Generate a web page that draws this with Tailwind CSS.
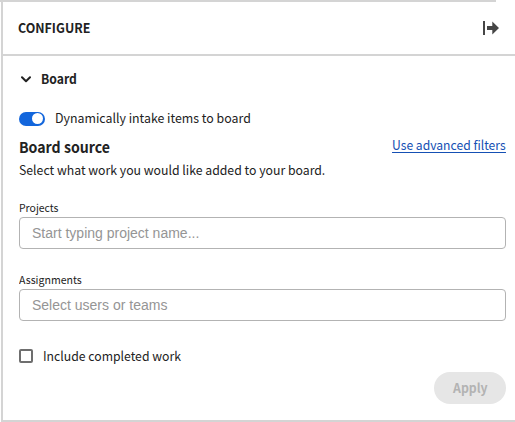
<!DOCTYPE html>
<html lang="en">
<head>
<meta charset="utf-8">
<title>Configure board</title>
<script src="https://cdn.jsdelivr.net/npm/@tailwindcss/browser@4"></script>
</head>
<body class="w-[515px] h-[422px] overflow-hidden bg-white text-[#222] font-['Noto_Sans_CJK_SC','Noto_Sans',sans-serif] text-[13px] leading-5">
<div class="h-[2px] w-[496px] bg-[#d4d4d4]"></div>
<aside class="ml-px h-[420px] border-l-2 border-b-2 border-[#d4d4d4]">
  <header class="flex h-[54px] items-center justify-between border-b-2 border-[#d4d4d4] pl-[15px] pr-4">
    <h1 class="origin-left scale-x-[.957] font-bold whitespace-nowrap">CONFIGURE</h1>
    <svg class="h-[14px] w-[16px]" viewBox="0 0 16 14" fill="#464646"><path d="M0 0h2v14H0zM4 5h5.300V.5L16 7 9.300 13.500V9H4z"/></svg>
  </header>
  <main class="pl-4 pr-[9px]">
    <div class="flex h-[46px] items-center">
      <svg class="mt-px ml-[2px] h-[7px] w-[10px]" viewBox="0 0 10 7" fill="none" stroke="#222" stroke-width="2" stroke-linecap="round" stroke-linejoin="round"><path d="M1 1.200l4 4 4-4"/></svg>
      <h2 class="ml-[10px] origin-left scale-x-[.935] font-bold">Board</h2>
    </div>
    <label class="mt-[6px] flex h-5 items-center whitespace-nowrap">
      <span class="mt-px flex h-[14px] w-[26px] items-center justify-end rounded-full bg-[#1366dc] pr-[2px]"><i class="block size-[11px] rounded-full bg-white"></i></span>
      <span class="ml-[10px] origin-left scale-x-[.951]">Dynamically intake items to board</span>
    </label>
    <div class="mt-[7px] flex h-6 items-center justify-between whitespace-nowrap">
      <h3 class="origin-left scale-x-[.942] text-[15px] font-bold">Board source</h3>
      <a class="mb-1 origin-right scale-x-[.934] border-b border-[#1550b4] text-[#1550b4] leading-[15px]">Use advanced filters</a>
    </div>
    <p class="mt-px origin-left scale-x-[.944] whitespace-nowrap">Select what work you would like added to your board.</p>
    <div class="mt-[19px] h-[18px] origin-left scale-x-[.95] text-[11px] leading-[16px]">Projects</div>
    <div class="flex h-8 items-center rounded-[4px] border border-[#b3b3b3] pl-3 font-['Liberation_Sans',sans-serif] text-[14px] text-[#959595]">Start typing project name...</div>
    <div class="mt-[22px] h-[18px] origin-left scale-x-[.96] text-[11px] leading-[16px]">Assignments</div>
    <div class="flex h-8 items-center rounded-[4px] border border-[#b3b3b3] pl-3 font-['Liberation_Sans',sans-serif] text-[14px] text-[#959595]">Select users or teams</div>
    <label class="mt-[25px] flex h-5 items-center">
      <span class="block size-[14px] rounded-[2px] border-2 border-[#6e6e6e]"></span>
      <span class="ml-[10px] origin-left scale-x-[.941]">Include completed work</span>
    </label>
    <div class="mt-[6px] flex justify-end">
      <button class="h-8 w-[72px] rounded-full bg-[#e6e6e6] font-bold text-[#b3b3b3]"><span class="inline-block scale-x-[.945]">Apply</span></button>
    </div>
  </main>
</aside>
</body>
</html>
